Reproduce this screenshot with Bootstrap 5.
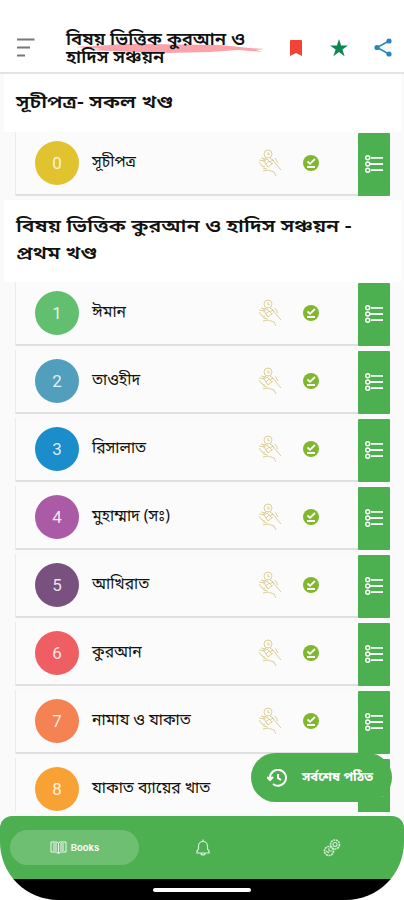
<!DOCTYPE html>
<html lang="bn">
<head>
<meta charset="utf-8">
<meta name="viewport" content="width=device-width, initial-scale=1">
<title>বিষয় ভিত্তিক কুরআন ও হাদিস সঞ্চয়ন</title>
<link href="https://cdn.jsdelivr.net/npm/bootstrap@5.3.0/dist/css/bootstrap.min.css" rel="stylesheet">
<style>
body{font-family:"Noto Sans Bengali","Noto Sans",Roboto,sans-serif;background:#fff;color:#111;height:900px;overflow:hidden}
.screen{width:404px;height:900px;overflow:hidden;border-radius:0 0 58px 58px;background:#fafafa}
.topbar{height:74px;padding:26px 12px 0 16px;border-bottom:2px solid #e4e4e4}
.menu-icon{margin-top:12px}
.app-title{font-size:17.5px;line-height:18px;font-weight:600;width:200px;margin-left:31px;height:46px;white-space:nowrap}
.title-text{padding-top:6px;transform:scaleX(1.06);transform-origin:left}
.title-text span{display:block}
.brush{left:-1px;top:16px}
.bookmark-icon{margin:13px 27px 0 0}
.star-icon{margin:13px 26px 0 0}
.share-icon{margin-top:12px}
.section-title{font-size:18px;line-height:27px;font-weight:600;margin:0 3px 0 4px;padding-left:12px;white-space:nowrap}
.section-title span{display:block;transform:scaleX(1.18);transform-origin:left}
.first-title{height:58px;padding-top:16px}
.second-title{height:82px;padding-top:14px}
.chapter{height:64px;margin:0 14px 4px 15px;background:#fbfbfb;border-bottom:2px solid #e0e0e0;border-left:1px solid #ebebeb;padding-left:19px}
.num{width:44px;height:44px;color:#ffffffd9;font:17px Roboto,sans-serif}
.name{font-size:15.7px;line-height:24px;width:166px;margin-left:13px;white-space:nowrap}
.done-icon{margin-left:21px}
.side{width:32px;height:63px;margin-left:39px;background:#4caf50;border-radius:1px;margin-top:2px}
.bottom-nav{top:816px;height:63px;background:#4caf50;border-radius:12px 12px 0 0;box-shadow:0 -4px #fafafa}
.pill{width:129px;height:35px;background:#6fbf72;margin-left:10px;font:600 9.5px Inter,sans-serif}
.bell{margin-left:56px}.gear{margin-left:112px}
.gesture{top:879px;height:21px;background:#000}
.gesture span{width:98px;height:4px;background:#fff;margin-top:9px}
.last-read{left:251px;top:753px;width:141px;height:49px;background:#4caf50;font-size:13px;font-weight:700;padding-left:16px;white-space:nowrap}
.read-label{margin-left:15px}
</style>
</head>
<body>
<svg width="0" height="0" class="position-absolute">
<symbol id="hand" viewBox="0 0 24 28"><g fill="none" stroke="#d8c98c" stroke-width=".9"><circle cx="10" cy="5" r="4"/><path d="M10 3v3l2-1M8 9l-4 3M12 9l4 3M1 11l5 1 4 6 5-4M1 13l3 4 3 1M3 9l4 1M6 12l3-2 3 3 3-2M8 15l3-3 3 3M14 10l4 5 5 6M17 9l3 5M5 22l5-1 6 2 2 4M5 19l4 1"/></g></symbol>
<symbol id="done" viewBox="0 0 16 16"><circle cx="8" cy="8" r="8" fill="#80b82d"/><path d="M4.500 6.500l2.500 2.300 5-4.800M4 12h8" fill="none" stroke="#fff" stroke-width="1.8"/></symbol>
<symbol id="items" viewBox="0 0 18 18"><g fill="none" stroke="#fff" stroke-width="1.5"><circle cx="2.700" cy="2.800" r="2"/><circle cx="2.700" cy="9" r="2"/><circle cx="2.700" cy="15.200" r="2"/><path d="M6 2.800h12M5 9h13M6 15.200h12" stroke-width="1.8"/></g></symbol>
</svg>
<div class="screen position-relative">
<header class="topbar bg-white d-flex">
<svg class="menu-icon" width="19" height="20" viewBox="0 0 19 20" fill="none" stroke="#777" stroke-width="2"><path d="M1 1.500h17.500M1 9.500h13M1 17.500h8"/></svg>
<div class="app-title position-relative">
<svg class="brush position-absolute" width="200" height="14" viewBox="0 0 200 14"><path d="M20 5Q65 1 80 2l75 1 30 3 15 1-9 1 6 2-24-2-28 2-44 1-33-1-45-2 14-1-27-2 18-1z" fill="#fba3aa"/></svg>
<div class="title-text"><span>বিষয় ভিত্তিক কুরআন ও</span><span>হাদিস সঞ্চয়ন</span></div>
</div>
<svg width="14" height="18" viewBox="0 0 14 18" class="bookmark-icon ms-auto"><path d="M2 1h10q1 0 1 1v15l-6-3-6 3V2q0-1 1-1z" fill="#f44336"/></svg>
<svg width="18" height="18" viewBox="0 0 18 18" class="star-icon"><path d="M9 0l2.100 6.500H18l-5.600 4 2.200 6.700L9 13.100l-5.600 4.100 2.200-6.700L0 6.500h6.900z" fill="#0b8750"/></svg>
<svg width="18" height="19" viewBox="0 0 18 19" class="share-icon"><path d="M15 3L3 9.500 15 16" fill="none" stroke="#2684c4" stroke-width="1.5"/><g fill="#2684c4"><circle cx="15" cy="3" r="2.600"/><circle cx="3" cy="9.500" r="2.600"/><circle cx="15" cy="16" r="2.600"/></g></svg>
</header>
<main id="list"></main>
<nav class="bottom-nav position-absolute w-100 d-flex align-items-center">
<a class="pill rounded-pill d-flex align-items-center justify-content-center text-white text-decoration-none gap-1"><svg width="17" height="14" viewBox="0 0 17 14" fill="none" stroke="#fff" stroke-width=".9"><path d="M1 1h6l1.500 1L10 1h6v10h-6l-1.500 2L7 11H1zM8.500 2v10M3 3h4M3 5h4M3 7h4M3 9h4M10 3h4M10 5h4M10 7h4M10 9h4"/></svg>Books</a>
<svg class="bell" width="16" height="18" viewBox="0 0 16 18" fill="none" stroke="#e2f3e3" stroke-width="1.2"><path d="M2 14V12l1.500-2V7a4.500 4.500 0 0 1 9 0v3L14 12v2zM8 2.500V.5M6 14a2 2 0 0 0 4 0"/></svg>
<svg class="gear" width="18" height="18" viewBox="0 0 18 18" fill="none" stroke="#d5edd6" stroke-width="1.1"><circle cx="12" cy="5.500" r="4.500" stroke-dasharray="2 .7" stroke-width="1.700"/><circle cx="12" cy="5.500" r="2"/><circle cx="6" cy="12" r="4.500" stroke-dasharray="2 .7" stroke-width="1.700"/><path d="M6 9v3h3M3 12l3 2"/></svg>
</nav>
<a class="last-read rounded-pill position-absolute d-flex align-items-center text-white text-decoration-none"><svg width="20" height="18" viewBox="0 0 20 18" fill="none" stroke="#fff" stroke-width="2"><path d="M3 9a8 8 0 1 1 3 6M0 8l3 3 3-3M11 5v4l3 2"/></svg><span class="read-label">সর্বশেষ পঠিত</span></a>
<div class="gesture position-absolute w-100 d-flex justify-content-center"><span class="rounded-pill"></span></div>
</div>
<script>
const chapters=[['সূচীপত্র','#e1c22f'],['ঈমান','#63bf70'],['তাওহীদ','#529fbd'],['রিসালাত','#1b8dcb'],['মুহাম্মাদ (সঃ)','#ab5ba6'],['আখিরাত','#79517f'],['কুরআন','#ef5e62'],['নামায ও যাকাত','#f58253'],['যাকাত ব্যায়ের খাত','#f8a135']];
const row=([name,color],i)=>`<div class="chapter d-flex align-items-center"><div class="num rounded-circle d-flex align-items-center justify-content-center" style="background:${color}">${i}</div><div class="name">${name}</div><svg width="24" height="28"><use href="#hand"/></svg><svg class="done-icon" width="16" height="16"><use href="#done"/></svg><div class="side d-flex align-items-center justify-content-center"><svg width="18" height="18"><use href="#items"/></svg></div></div>`;
document.getElementById('list').innerHTML='<h2 class="section-title first-title bg-white"><span>সূচীপত্র- সকল খণ্ড</span></h2>'+row(chapters[0],0)+'<h2 class="section-title second-title bg-white"><span>বিষয় ভিত্তিক কুরআন ও হাদিস সঞ্চয়ন -</span><span>প্রথম খণ্ড</span></h2>'+chapters.slice(1).map((c,i)=>row(c,i+1)).join('');
</script>
<script src="https://cdn.jsdelivr.net/npm/bootstrap@5.3.0/dist/js/bootstrap.bundle.min.js"></script>
</body>
</html>
